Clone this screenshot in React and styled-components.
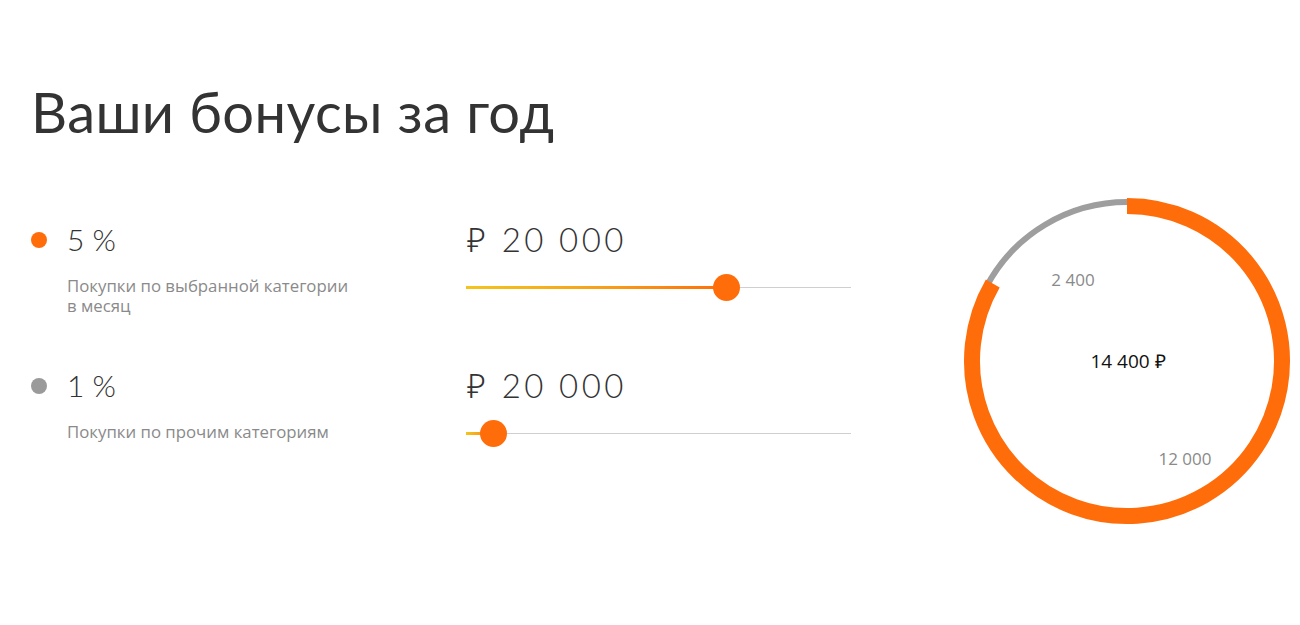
import styled, { createGlobalStyle } from "styled-components";

const GlobalStyle = createGlobalStyle`
  body {
    margin: 0;
    background: #fff;
    font-family: "Open Sans", "Liberation Sans", sans-serif;
  }
`;

const Page = styled.div`
  width: 1300px;
  height: 625px;
  box-sizing: border-box;
  padding: 78px 0 0 31px;
  overflow: hidden;
`;

const Title = styled.h1`
  margin: 0;
  font-family: "Lato", "Noto Sans", sans-serif;
  font-weight: 400;
  font-size: 56px;
  line-height: 68px;
  color: #333;
  letter-spacing: 0.4px;
`;

const Body = styled.div`
  display: flex;
  margin-top: 50px;
`;

const Rows = styled.div`
  display: flex;
  flex-direction: column;
  gap: 46px;
  padding-top: 28px;
`;

const Row = styled.div`
  display: grid;
  grid-template-columns: 435px 386px;
  height: 100px;
`;

const Info = styled.div`
  display: grid;
  grid-template-columns: 36px 1fr;
  align-items: start;
`;

const Dot = styled.span`
  width: 16px;
  height: 16px;
  border-radius: 50%;
  background: ${(p) => p.color};
  margin-top: 8px;
`;

const Percent = styled.div`
  font-family: "Lato", "Noto Sans", sans-serif;
  font-weight: 300;
  font-size: 30px;
  line-height: 30px;
  color: #333;
`;

const Desc = styled.div`
  margin-top: 22px;
  font-size: 16.8px;
  line-height: 20px;
  color: #8a8a8a;
  width: 292px;
`;

const SliderBox = styled.div`
  display: flex;
  flex-direction: column;
`;

const Amount = styled.div`
  font-family: "Lato", "Noto Sans", sans-serif;
  font-weight: 300;
  font-size: 33px;
  line-height: 30px;
  color: #333;
  margin-left: 1px;
  letter-spacing: 3.4px;
`;

const Track = styled.div`
  position: relative;
  height: 1px;
  background: #cfcfcf;
  margin-top: 33px;
  margin-right: 1px;
`;

const Fill = styled.div`
  position: absolute;
  left: 0;
  top: -1px;
  height: 3px;
  background: linear-gradient(90deg, #f3c51c 0%, #f7a21a 50%, #ff6d0a 100%);
`;

const Thumb = styled.div`
  position: absolute;
  top: -13px;
  width: 27px;
  height: 27px;
  margin-left: -13px;
  border-radius: 50%;
  background: #ff6d0a;
`;

const Chart = styled.div`
  position: relative;
  width: 330px;
  height: 330px;
  margin-left: 110px;
`;

const ChartLabel = styled.span`
  position: absolute;
  font-size: ${(p) => p.size || 17}px;
  color: ${(p) => p.color || "#8a8a8a"};
  white-space: nowrap;
  transform: translate(-50%, -50%);
`;

function Slider({ amount, value }) {
  return (
    <SliderBox>
      <Amount>{amount}</Amount>
      <Track>
        <Fill style={{ width: `${value}%` }} />
        <Thumb style={{ left: `${value}%` }} />
      </Track>
    </SliderBox>
  );
}

const rows = [
  {
    color: "#ff6d0a",
    percent: "5 %",
    desc: "Покупки по выбранной категории в месяц",
    amount: "₽ 20 000",
    value: 67.5,
  },
  {
    color: "#9a9a9a",
    percent: "1 %",
    desc: "Покупки по прочим категориям",
    amount: "₽ 20 000",
    value: 7,
  },
];

function Donut() {
  const cx = 165;
  const cy = 165;
  const r = 155;
  const grey = 60;
  const toXY = (deg, rad) => {
    const a = ((deg - 90) * Math.PI) / 180;
    return [cx + rad * Math.cos(a), cy + rad * Math.sin(a)];
  };
  const [ox1, oy1] = toXY(0, r);
  const [ox2, oy2] = toXY(360 - grey, r);
  const [gx1, gy1] = toXY(360 - grey - 2, r + 4);
  const [gx2, gy2] = toXY(360, r + 4);
  return (
    <Chart>
      <svg width="330" height="330" viewBox="0 0 330 330">
        <path
          d={`M ${gx1} ${gy1} A ${r + 4} ${r + 4} 0 0 1 ${gx2} ${gy2}`}
          fill="none"
          stroke="#9e9e9e"
          strokeWidth="6"
        />
        <path
          d={`M ${ox1} ${oy1} A ${r} ${r} 0 1 1 ${ox2} ${oy2}`}
          fill="none"
          stroke="#ff6d0a"
          strokeWidth="16"
        />
      </svg>
      <ChartLabel style={{ left: 111, top: 83 }}>2 400</ChartLabel>
      <ChartLabel size={19} color="#111" style={{ left: 166, top: 165 }}>
        14 400 ₽
      </ChartLabel>
      <ChartLabel style={{ left: 223, top: 262 }}>12 000</ChartLabel>
    </Chart>
  );
}

export default function App() {
  return (
    <Page>
      <GlobalStyle />
      <Title>Ваши бонусы за год</Title>
      <Body>
        <Rows>
          {rows.map((row) => (
            <Row key={row.percent}>
              <Info>
                <Dot color={row.color} />
                <div>
                  <Percent>{row.percent}</Percent>
                  <Desc>{row.desc}</Desc>
                </div>
              </Info>
              <Slider amount={row.amount} value={row.value} />
            </Row>
          ))}
        </Rows>
        <Donut />
      </Body>
    </Page>
  );
}
